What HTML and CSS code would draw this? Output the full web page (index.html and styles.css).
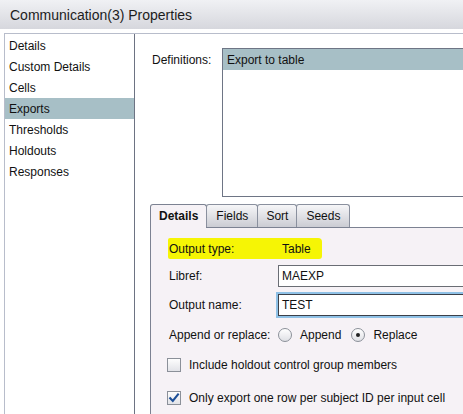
FILE: index.html
```html
<!DOCTYPE html>
<html>
<head>
<meta charset="utf-8">
<title>Communication(3) Properties</title>
<link rel="stylesheet" href="styles.css">
</head>
<body>
<div class="titlebar">Communication(3) Properties</div>
<div class="main">
  <ul class="nav">
    <li>Details</li>
    <li>Custom Details</li>
    <li>Cells</li>
    <li class="selected">Exports</li>
    <li>Thresholds</li>
    <li>Holdouts</li>
    <li>Responses</li>
  </ul>
  <div class="content">
    <div class="defs">
      <span class="defs-label">Definitions:</span>
      <div class="listbox">
        <div class="listbox-item selected">Export to table</div>
      </div>
    </div>
    <div class="tabs">
      <div class="tab-strip">
        <span class="tab active pad8">Details</span>
        <span class="tab pad9">Fields</span>
        <span class="tab pad8">Sort</span>
        <span class="tab pad9">Seeds</span>
      </div>
      <div class="tab-panel">
        <div class="row highlight"><span class="hl-label">Output type:</span><span>Table</span></div>
        <div class="row field-row first"><span class="label">Libref:</span><div class="textfield">MAEXP</div></div>
        <div class="row field-row second"><span class="label">Output name:</span><div class="textfield focused">TEST</div></div>
        <div class="row radio-row">
          <span class="label">Append or replace:</span>
          <span class="radio"></span><span class="radio-text">Append</span>
          <span class="radio checked"></span><span class="radio-text">Replace</span>
        </div>
        <div class="row check-row first-check">
          <span class="checkbox"></span><span>Include holdout control group members</span>
        </div>
        <div class="row check-row second-check">
          <span class="checkbox"><svg width="12" height="12" viewBox="0 0 12 12"><path d="M2.2 6.2 L4.8 9 L10 2.4" fill="none" stroke="#1d4f98" stroke-width="2.1" stroke-linecap="square"/></svg></span><span>Only export one row per subject ID per input cell</span>
        </div>
      </div>
    </div>
  </div>
</div>
</body>
</html>
```
FILE: styles.css
```css
* { box-sizing: border-box; }
html, body { margin: 0; padding: 0; }
body {
  width: 463px;
  height: 414px;
  overflow: hidden;
  background: #fff;
  font-family: "Liberation Sans", Arial, sans-serif;
  font-size: 12px;
  color: #111;
}
.titlebar {
  height: 29px;
  line-height: 30px;
  padding-left: 10px;
  font-size: 14px;
  color: #1c1c1c;
  background: linear-gradient(#f0f1f4, #d6d7dd);
}
.main {
  margin: 4px 0 0 4px;
  height: 381px;
  display: flex;
  border-top: 1px solid #b8bdcb;
  border-left: 1px solid #b8bdcb;
}
.nav {
  width: 130px;
  flex: none;
  margin: 0;
  padding: 1px 0 0;
  list-style: none;
  border-right: 1px solid #6d7383;
}
.nav li {
  height: 21px;
  line-height: 22px;
  padding-left: 4px;
}
.nav li.selected { background: #a7bfc6; }
.content {
  flex: 1;
  min-width: 0;
  overflow: hidden;
  padding-left: 15px;
}
.defs {
  display: flex;
  margin-top: 14px;
}
.defs-label {
  flex: none;
  width: 72px;
  padding-left: 2px;
  margin-top: 1px;
  line-height: 22px;
}
.listbox {
  flex: none;
  width: 260px;
  height: 149px;
  border: 1px solid #6e7585;
  background: #fff;
}
.listbox-item {
  height: 21px;
  line-height: 22px;
  padding-left: 4px;
}
.listbox-item.selected { background: #a7bfc6; }
.tabs { margin-top: 7px; }
.tab-strip {
  display: flex;
  align-items: flex-end;
  height: 24px;
  border-bottom: 1px solid #7c8292;
}
.tab {
  flex: none;
  height: 23px;
  line-height: 23px;
  border: 1px solid #8a909e;
  border-bottom: none;
  border-radius: 3px 3px 0 0;
  margin-left: -1px;
  background: linear-gradient(#f6f6f8, #cbccd3);
  color: #111;
}
.tab.pad8 { padding: 0 8px; }
.tab.pad9 { padding: 0 9px; }
.tab.active {
  margin-left: 0;
  height: 24px;
  margin-bottom: -1px;
  background: #f6f2f6;
  font-weight: bold;
  border-color: #7c8292;
}
.tab-panel {
  background: #f6f2f6;
  border-left: 1px solid #7c8292;
  height: 200px;
  padding: 10px 0 0 18px;
}
.row {
  display: flex;
  align-items: center;
}
.highlight {
  margin-left: -1px;
  padding-left: 1px;
  padding-top: 1px;
  width: 154px;
  height: 21px;
  background: #f6f505;
  border-radius: 2px 4px 3px 2px;
}
.hl-label { width: 113px; flex: none; }
.label { width: 109px; flex: none; }
.field-row.first { margin-top: 6px; }
.field-row.second { margin-top: 7px; }
.textfield {
  flex: none;
  width: 220px;
  height: 22px;
  line-height: 21px;
  padding-left: 3px;
  border: 1px solid #6a6d74;
  background: #fff;
}
.textfield.focused {
  border-color: #3c4048;
  box-shadow: 0 0 0 2px #8fc1e6;
}
.radio-row {
  margin-top: 9px;
  height: 20px;
}
.radio {
  flex: none;
  width: 14px;
  height: 14px;
  border: 1px solid #8b9099;
  border-radius: 50%;
  background: linear-gradient(#ffffff, #dfe0e5);
  display: flex;
  align-items: center;
  justify-content: center;
}
.radio.checked::after {
  content: "";
  width: 4px;
  height: 4px;
  border-radius: 50%;
  background: #222;
}
.radio-text { margin: 0 10px 0 8px; }
.check-row { height: 20px; }
.first-check { margin-top: 10px; }
.second-check { margin-top: 13px; }
.checkbox {
  flex: none;
  width: 14px;
  height: 14px;
  margin: 0 8px 0 -2px;
  border: 1px solid #8b9099;
  background: linear-gradient(#fdfdfd, #e2e3e8);
  display: flex;
  align-items: center;
  justify-content: center;
}
.checkbox svg { display: block; }
```
